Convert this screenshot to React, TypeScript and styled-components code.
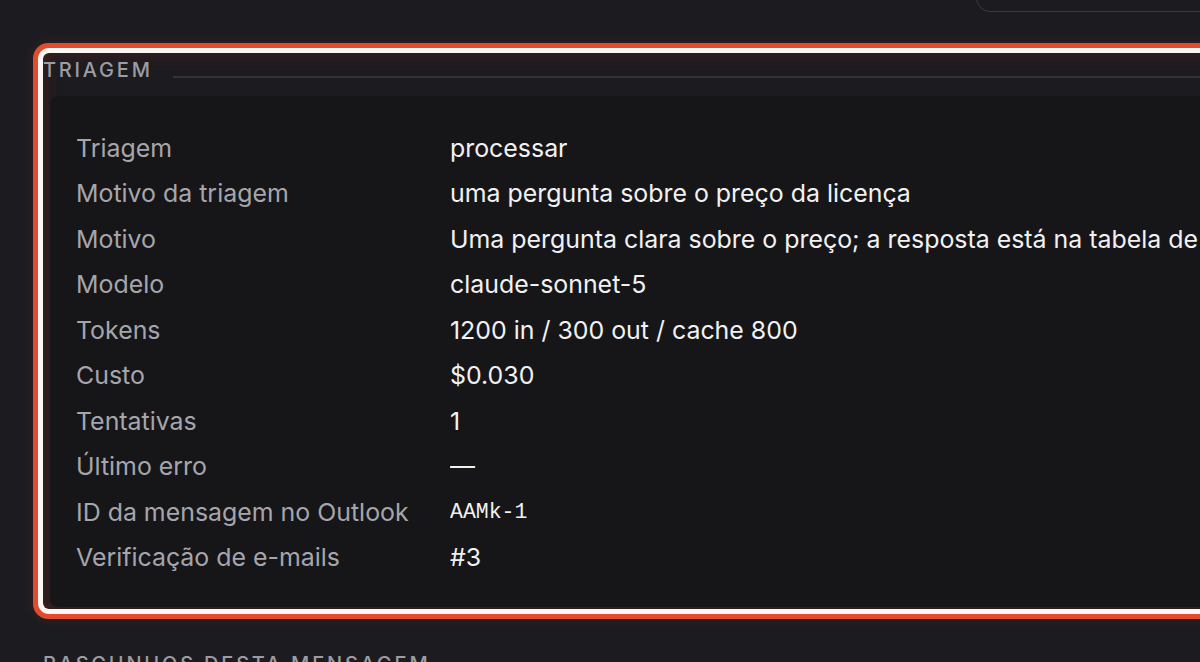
import styled, { createGlobalStyle } from "styled-components";

const GlobalStyle = createGlobalStyle`
  html, body {
    margin: 0;
    padding: 0;
    background: #1c1c20;
    font-family: Inter, "Noto Sans", sans-serif;
    overflow: hidden;
  }
`;

const rows: { label: string; value: string; mono?: boolean }[] = [
  { label: "Triagem", value: "processar" },
  { label: "Motivo da triagem", value: "uma pergunta sobre o preço da licença" },
  {
    label: "Motivo",
    value: "Uma pergunta clara sobre o preço; a resposta está na tabela de preços.",
  },
  { label: "Modelo", value: "claude-sonnet-5" },
  { label: "Tokens", value: "1200 in / 300 out / cache 800" },
  { label: "Custo", value: "$0.030" },
  { label: "Tentativas", value: "1" },
  { label: "Último erro", value: "—" },
  { label: "ID da mensagem no Outlook", value: "AAMk-1", mono: true },
  { label: "Verificação de e-mails", value: "#3" },
];

const Page = styled.div`
  width: 1200px;
  height: 662px;
  overflow: hidden;
  padding: 0 0 0 43px;
  box-sizing: border-box;
`;

const TopBar = styled.div`
  height: 12px;
  display: flex;
  justify-content: flex-end;
  align-items: flex-end;
  overflow: hidden;
`;

const SearchBox = styled.div`
  width: 260px;
  height: 40px;
  flex-shrink: 0;
  margin-right: -36px;
  border: 1px solid #3a3a41;
  border-radius: 14px;
  box-sizing: border-box;
`;

const Section = styled.section<{ $active?: boolean }>`
  margin-right: -200px;
  margin-top: ${(p) => (p.$active ? "41px" : "38px")};
  padding: 6px 0 2px 0;
  border-radius: 6px;
  ${(p) =>
    p.$active &&
    `
    box-shadow:
      0 0 0 5px #fbf7f5,
      0 0 0 10px #e34b2f,
      0 0 14px 10px rgba(227, 75, 47, 0.12),
      inset 0 0 18px rgba(150, 40, 25, 0.35);
  `}
`;

const SectionHead = styled.div`
  display: flex;
  align-items: flex-end;
  gap: 20px;
  height: 22px;
  margin-bottom: 15px;
`;

const SectionTitle = styled.h2`
  margin: 0;
  font-size: 20px;
  font-weight: 500;
  letter-spacing: 2.8px;
  line-height: 22px;
  color: #9c9ca4;
  text-transform: uppercase;
  white-space: nowrap;
`;

const Rule = styled.div`
  flex: 1;
  height: 2px;
  margin-bottom: 3px;
  background: #323238;
`;

const Card = styled.div`
  margin-left: 7px;
  background: #161618;
  border-radius: 8px 0 0 8px;
  padding: 29px 0 27px 26px;
`;

const Row = styled.div`
  display: grid;
  grid-template-columns: 374px 1fr;
  height: 45.5px;
  align-items: center;
  font-size: 24.9px;
  white-space: nowrap;
`;

const Label = styled.span`
  color: #a5a5ad;
`;

const Value = styled.span<{ $mono?: boolean }>`
  color: #f1f1f3;
  overflow: hidden;
  font-family: ${(p) => (p.$mono ? '"Liberation Mono", "DejaVu Sans Mono", monospace' : "inherit")};
  font-size: ${(p) => (p.$mono ? "21.5px" : "inherit")};
`;

export default function App() {
  return (
    <Page>
      <GlobalStyle />
      <TopBar>
        <SearchBox />
      </TopBar>
      <Section $active>
        <SectionHead>
          <SectionTitle>Triagem</SectionTitle>
          <Rule />
        </SectionHead>
        <Card>
          {rows.map((r) => (
            <Row key={r.label}>
              <Label>{r.label}</Label>
              <Value $mono={r.mono}>{r.value}</Value>
            </Row>
          ))}
        </Card>
      </Section>
      <Section>
        <SectionHead>
          <SectionTitle>Rascunhos desta mensagem</SectionTitle>
          <Rule />
        </SectionHead>
      </Section>
    </Page>
  );
}
